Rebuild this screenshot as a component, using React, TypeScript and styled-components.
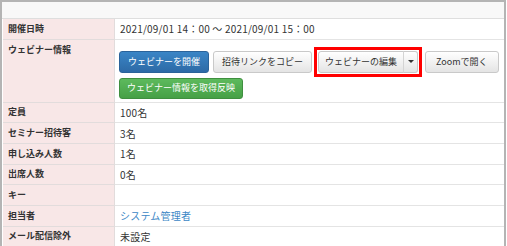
import React, { FC } from 'react';
import styled, { createGlobalStyle } from 'styled-components';

const GlobalStyle = createGlobalStyle`
  html, body {
    margin: 0;
    padding: 0;
    background: #ffffff;
  }
  body {
    font-family: "Noto Sans CJK JP", "Noto Sans", sans-serif;
    color: #333333;
  }
`;

const Frame = styled('div')`
  box-sizing: border-box;
  width: 506px;
  height: 246px;
  border: 2px solid #b4b4b4;
  border-bottom: none;
  overflow: hidden;
  background: #ffffff;
`;

const TopBar = styled('div')`
  height: 16px;
  background: #f8f8f8;
  border-bottom: 1px solid #dedede;
`;

const Table = styled('div')`
  display: grid;
  grid-template-columns: 112px 1fr;
  margin-left: 1px;
`;

const Label = styled('div')<{ $tall?: boolean }>`
  box-sizing: border-box;
  min-height: 20.67px;
  padding: ${({ $tall }) => ($tall ? '4px 0 0 5px' : '0 0 0 5px')};
  display: flex;
  align-items: ${({ $tall }) => ($tall ? 'flex-start' : 'center')};
  background: #f8e7e7;
  border-bottom: 1px solid #e2dcdc;
  border-right: 1px solid #e2dcdc;
  font-size: 9px;
  font-weight: bold;
  line-height: 12px;
  color: #333333;
`;

const Value = styled('div')`
  box-sizing: border-box;
  min-height: 20.67px;
  padding: 0 0 0 5px;
  display: flex;
  align-items: center;
  border-bottom: 1px solid #e4e4e4;
  font-size: 10px;
  line-height: 13px;
  letter-spacing: 0.2px;
  color: #333333;
`;

const ButtonCell = styled('div')`
  box-sizing: border-box;
  padding: 11px 0 3px 4px;
  display: flex;
  flex-direction: column;
  gap: 5px;
  border-bottom: 1px solid #e4e4e4;
`;

const ButtonRow = styled('div')`
  display: flex;
  align-items: center;
  gap: 4px;
`;

const Button = styled('button')<{ $tone?: 'primary' | 'success' | 'default'; $tall?: number; $pad?: number }>`
  box-sizing: border-box;
  height: ${({ $tall }) => $tall ?? 22}px;
  padding: 0 ${({ $pad }) => $pad ?? 8}px;
  font-family: "Noto Sans CJK JP", "Noto Sans", sans-serif;
  font-size: 9px;
  line-height: 12px;
  border-radius: 3px;
  cursor: pointer;
  white-space: nowrap;
  border: 1px solid
    ${({ $tone }) => ($tone === 'primary' ? '#2b639a' : $tone === 'success' ? '#3f8f3f' : '#c9c9c9')};
  color: ${({ $tone }) => ($tone === 'primary' || $tone === 'success' ? '#ffffff' : '#333333')};
  background: ${({ $tone }) =>
    $tone === 'primary'
      ? 'linear-gradient(#3a85c6, #2d6aa6)'
      : $tone === 'success'
        ? 'linear-gradient(#5dba5d, #46a046)'
        : 'linear-gradient(#ffffff, #e4e4e4)'};
`;

const SplitGroup = styled('div')`
  display: flex;
  margin: 0 3px 0 2px;
  outline: 3px solid #ff0000;
  outline-offset: 1px;
`;

const SplitMain = styled(Button)`
  border-radius: 3px 0 0 3px;
`;

const SplitCaret = styled(Button)`
  width: 15px;
  padding: 0;
  border-left-color: #d4d4d4;
  margin-left: -1px;
  border-radius: 0 3px 3px 0;
  display: flex;
  align-items: center;
  justify-content: center;

  &::after {
    content: '';
    border-left: 3px solid transparent;
    border-right: 3px solid transparent;
    border-top: 3px solid #333333;
  }
`;

const Link = styled('a')`
  color: #3c87c6;
  text-decoration: none;
`;

type Row = { label: string; value: React.ReactNode };

const rows: Row[] = [
  { label: '定員', value: '100名' },
  { label: 'セミナー招待客', value: '3名' },
  { label: '申し込み人数', value: '1名' },
  { label: '出席人数', value: '0名' },
  { label: 'キー', value: '' },
  { label: '担当者', value: <Link href="#">システム管理者</Link> },
  { label: 'メール配信除外', value: '未設定' },
];

const App: FC = () => {
  return (
    <>
      <GlobalStyle />
      <Frame>
        <TopBar />
        <Table>
          <Label>開催日時</Label>
          <Value>2021/09/01 14：00 ～ 2021/09/01 15：00</Value>

          <Label $tall>ウェビナー情報</Label>
          <ButtonCell>
            <ButtonRow>
              <Button $tone="primary">ウェビナーを開催</Button>
              <Button>招待リンクをコピー</Button>
              <SplitGroup>
                <SplitMain $pad={6}>ウェビナーの編集</SplitMain>
                <SplitCaret aria-label="menu" />
              </SplitGroup>
              <Button $pad={10}>Zoomで開く</Button>
            </ButtonRow>
            <ButtonRow>
              <Button $tone="success" $tall={21} $pad={7}>ウェビナー情報を取得反映</Button>
            </ButtonRow>
          </ButtonCell>

          {rows.map((row) => (
            <React.Fragment key={row.label}>
              <Label>{row.label}</Label>
              <Value>{row.value}</Value>
            </React.Fragment>
          ))}
        </Table>
      </Frame>
    </>
  );
};

export default App;
